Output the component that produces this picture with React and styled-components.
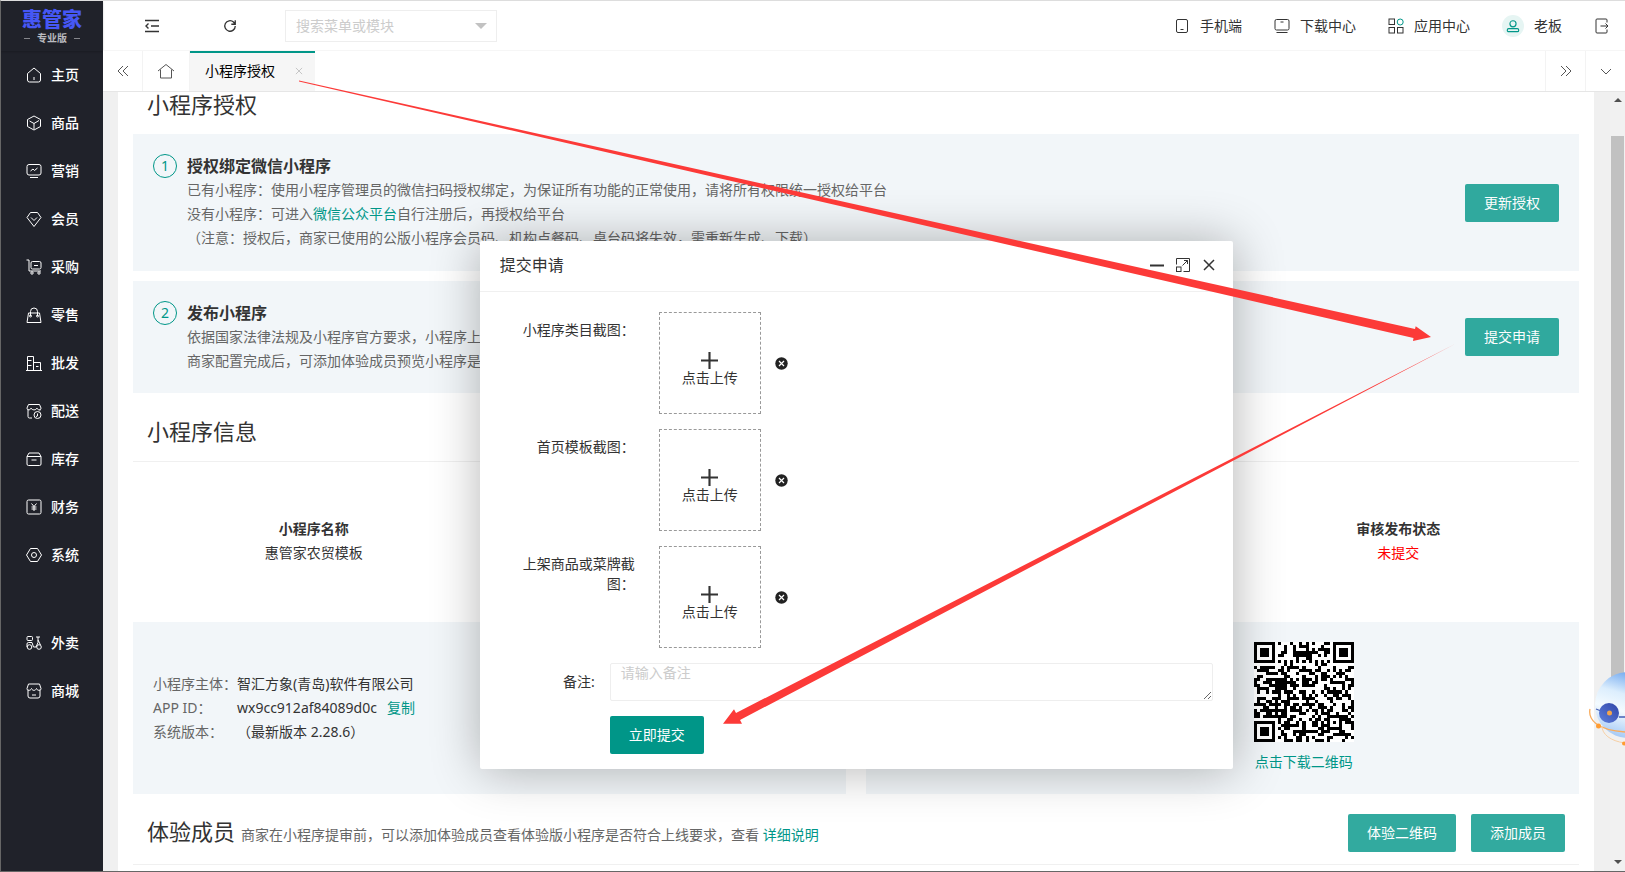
import React, { useState } from 'react';
import styled, { createGlobalStyle, css } from 'styled-components';

const GlobalStyle = createGlobalStyle`
  * {
    box-sizing: border-box;
  }
  body {
    margin: 0;
    color: #333;
    font: 14px/24px "Noto Sans", "Noto Sans CJK SC", sans-serif;
    overflow: hidden;
  }
  button, input, textarea {
    font: inherit;
  }
  a {
    color: #009688;
    text-decoration: none;
  }
`;

const Layout = styled.div`
  display: flex;
  height: 100vh;
  border: 1px solid #666;
  border-top-color: #ddd;
  border-right: 0;
  overflow: hidden;
`;

const Sidebar = styled.nav`
  flex: none;
  width: 102px;
  background: #20222a;
`;

const Logo = styled.div`
  display: flex;
  flex-direction: column;
  align-items: center;
  height: 50px;
  padding-top: 8px;
  font-size: 20px;
  font-weight: 900;
  line-height: 22px;
  color: #4657f5;
  box-shadow: 0 1px 2px rgba(0, 0, 0, 0.2);
`;

const Edition = styled.div`
  display: flex;
  align-items: center;
  gap: 7px;
  font-size: 10px;
  font-weight: 700;
  line-height: 14px;
  color: #b9babf;

  &::before,
  &::after {
    content: "";
    width: 6px;
    height: 1px;
    background: #85868b;
  }
`;

const MenuItem = styled.a`
  display: flex;
  align-items: center;
  gap: 9px;
  height: 48px;
  padding-left: 25px;
  margin-top: ${props => (props.$gap ? '40px' : '0')};
  color: #fff;
  font-weight: 500;
`;

const Main = styled.div`
  display: flex;
  flex: 1;
  flex-direction: column;
  min-width: 0;
`;

const Header = styled.header`
  display: flex;
  align-items: center;
  justify-content: space-between;
  height: 50px;
  flex: none;
  border-bottom: 1px solid #f6f6f6;
`;

const HeaderLeft = styled.div`
  display: flex;
  align-items: center;
  padding-left: 41px;
`;

const HeaderRight = styled.div`
  display: flex;
  align-items: center;
  padding-right: 15px;
`;

const IconButton = styled.button`
  display: flex;
  align-items: center;
  justify-content: center;
  padding: 0;
  width: ${props => props.$width || 16}px;
  height: 16px;
  margin-right: ${props => props.$space || 0}px;
  border: 0;
  background: none;
  color: ${props => (props.$muted ? '#c2c2c2' : '#333')};
  cursor: pointer;
`;

const SearchBox = styled.div`
  display: flex;
  align-items: center;
  width: 212px;
  height: 32px;
  padding: 0 9px 0 10px;
  border: 1px solid #eee;
`;

const SearchInput = styled.input`
  flex: 1;
  min-width: 0;
  padding: 0;
  border: 0;
  outline: 0;

  &::placeholder {
    color: #ccc;
  }
`;

const Caret = styled.span`
  border: 6px solid transparent;
  border-top-color: #c2c2c2;
  border-bottom: 0;
`;

const HeaderLink = styled.a`
  display: flex;
  align-items: center;
  gap: 10px;
  margin-right: 32px;
  color: #333;
`;

const Avatar = styled.span`
  display: flex;
  align-items: center;
  justify-content: center;
  width: 22px;
  height: 22px;
  border-radius: 50%;
  background: #e6f5f3;
  color: #009688;
`;

const Tabs = styled.div`
  display: flex;
  flex: none;
  height: 41px;
  border-bottom: 1px solid #e6e6e6;
`;

const TabControl = styled.button`
  display: flex;
  align-items: center;
  justify-content: center;
  width: ${props => props.$width || 40}px;
  padding: 0;
  border: 0;
  border-right: 1px solid #f3f3f3;
  background: #fff;
  color: #555;

  ${props => props.$right && css`
    border-right: 0;
    border-left: 1px solid #f3f3f3;
  `}
`;

const Tab = styled.div`
  display: flex;
  align-items: center;
  gap: 19px;
  height: 40px;
  padding: 0 11px 2px 15px;
  margin-right: auto;
  border-top: 2px solid #009688;
  background: #f6f6f6;
  color: #000;
`;

const Body = styled.div`
  position: relative;
  display: flex;
  flex: 1;
  min-height: 0;
  overflow: hidden;
  background: #f0f0f0;
`;

const Page = styled.main`
  flex: 1;
  margin: 0 16px 0 15px;
  padding: 0 15px;
  background: #fff;
`;

const Scrollbar = styled.div`
  display: flex;
  flex-direction: column;
  align-items: center;
  width: 15px;
  padding: 6px 0 7px;
  background: #f1f1f1;
`;

const ScrollArrow = styled.span`
  border: 4px solid transparent;
  border-top-width: ${props => (props.$up ? 0 : 4)}px;
  border-bottom-width: ${props => (props.$up ? 4 : 0)}px;
  border-${props => (props.$up ? 'bottom' : 'top')}-color: #505050;
`;

const Thumb = styled.span`
  width: 13px;
  height: 570px;
  margin: 34px 0 auto;
  background: #c1c1c1;
`;

const TitleRow = styled.div`
  display: flex;
  align-items: center;
  gap: 15px;
  height: ${props => props.$height}px;
  padding: 7px 14px 0;
  border-bottom: 1px solid #f0f0f0;
`;

// the heading that sits right under the tabs
const TopTitleRow = styled.div`
  padding: 0 14px 18px;
`;

const Title = styled.h2`
  margin: 0;
  margin-right: auto;
  font-size: 22px;
  font-weight: 400;
  line-height: 24px;
`;

const Hint = styled.small`
  margin-left: 6px;
  font-size: 14px;
  color: #666;
`;

const Panel = styled.section`
  display: flex;
  align-items: center;
  gap: 10px;
  padding: 20px;
  background: #f2f6f9;
`;

const Step = styled(Panel)`
  align-items: flex-start;
  height: ${props => props.$height}px;
  margin-bottom: ${props => props.$space || 0}px;
`;

const StepNumber = styled.span`
  display: flex;
  align-items: center;
  justify-content: center;
  width: 24px;
  height: 24px;
  border: 1px solid #009688;
  border-radius: 50%;
  color: #009688;
`;

const StepText = styled.div`
  flex: 1;
  color: #666;
`;

const StepTitle = styled.h3`
  margin: 0;
  font-size: 16px;
  line-height: 24px;
  color: #333;
`;

const Button = styled.button`
  height: 38px;
  padding: 0 19px;
  border: 0;
  border-radius: 2px;
  background: #009688;
  color: #fff;
  white-space: nowrap;
  opacity: ${props => (props.$soft ? 0.8 : 1)};
  align-self: ${props => (props.$submit ? 'flex-start' : 'center')};
  margin-left: ${props => (props.$submit ? '110px' : '0')};
`;

const Summary = styled.div`
  display: grid;
  grid-template-columns: repeat(4, 1fr);
  align-items: center;
  height: 160px;
  padding-bottom: 2px;
  text-align: center;
`;

const SummaryItem = styled.div`
  grid-column: ${props => props.$column};
  color: ${props => (props.$alert ? '#f00' : '#333')};
`;

const SummaryName = styled.strong`
  display: block;
  color: #333;
`;

const Panels = styled.div`
  display: grid;
  grid-template-columns: 1fr 1fr;
  gap: 20px;
`;

const Details = styled.dl`
  display: grid;
  grid-template-columns: 84px auto;
  margin: 0;
`;

const Term = styled.dt`
  color: #666;
`;

const Value = styled.dd`
  margin: 0;
`;

const CopyLink = styled.a`
  margin-left: 10px;
`;

const CodePanel = styled(Panel)`
  padding-left: 54.4%;
`;

const Code = styled.div`
  display: flex;
  flex-direction: column;
  align-items: center;
  gap: 8px;
`;

const Overlay = styled.div`
  position: absolute;
  inset: 0 15px 0 0;
  display: flex;
  align-items: flex-start;
  justify-content: center;
  padding-top: 149px;
`;

const Dialog = styled.div`
  width: 50%;
  border-radius: 2px;
  background: #fff;
  box-shadow: 1px 1px 50px rgba(0, 0, 0, 0.3);
`;

const DialogHead = styled.div`
  display: flex;
  align-items: center;
  height: 51px;
  padding: 0 16px 2px 20px;
  border-bottom: 1px solid #f0f0f0;
  font-size: 16px;
`;

const DialogTitle = styled.span`
  margin-right: auto;
`;

const Form = styled.form`
  display: flex;
  flex-direction: column;
  gap: 15px;
  padding: 20px 20px 15px;
`;

const Field = styled.div`
  display: flex;
`;

const UploadLabel = styled.label`
  width: 135px;
  padding: 8px 0 0 15px;
  margin-right: 24px;
  line-height: 20px;
  text-align: right;
`;

const UploadBox = styled.button`
  display: flex;
  flex-direction: column;
  align-items: center;
  justify-content: center;
  gap: 1px;
  width: 102px;
  height: 102px;
  padding: 11px 0 0;
  margin-right: 14px;
  border: 1px dashed #999;
  background: #fff;
  color: #333;
  line-height: 16px;
`;

const ClearButton = styled(IconButton)`
  align-self: center;
`;

const NoteLabel = styled.label`
  width: 110px;
  padding: 7px 15px 0 0;
  text-align: right;
`;

const Note = styled.textarea`
  flex: 1;
  display: block;
  height: 38px;
  padding: 0 10px;
  border: 1px solid #eee;
  border-radius: 2px;
  outline: 0;
  line-height: 18px;
  resize: vertical;

  &::placeholder {
    color: #ccc;
  }
`;

const Marks = styled.svg`
  position: fixed;
  inset: 0;
  width: 100vw;
  height: 100vh;
  pointer-events: none;
`;

const Robot = styled.svg`
  position: fixed;
  right: 0;
  top: 664px;
`;

const glyphs = {
  home: <><path d="M1.5 6.500 8 1l6.500 5.500V13a2 2 0 0 1-2 2h-9a2 2 0 0 1-2-2z" /><path d="M8 10v3" /></>,
  goods: <><path d="m8 1 6.500 3.500v7L8 15l-6.500-3.500v-7z" /><path d="M3.500 6 8 8.500l5-3M8 8.500V14" /></>,
  promo: <><rect x="1" y="1.500" width="14" height="10.500" rx="2" /><path d="m4.500 8 2.500-2 1.500 1.500L11.500 5M4 14.500h8" /></>,
  member: <><path d="M4.500 1.500h7L15 6.500 8 15.500 1 6.500z" /><path d="m5 6.500 3 3 3-3" /></>,
  buy: <><path d="M.5 1H3v11h12" /><rect x="5" y="2.500" width="10" height="7.500" rx="1.500" /><path d="M8 6.500h4" /><circle cx="6" cy="14" r="1.200" /><circle cx="13" cy="14" r="1.200" /></>,
  retail: <><path d="M2.500 6h11l1.500 9.500H1z" /><path d="M4.500 9V4.500a3.500 3.500 0 0 1 7 0V9" /><circle cx="4.500" cy="9" r="1" /><circle cx="11.500" cy="9" r="1" /></>,
  batch: <><path d="M1.500 15V1.500h6V15M7.500 7.500h7V15M0 15.500h16M1.500 5.500h4M1.500 10.500h4M10 11.500h2.500" /></>,
  delivery: <><path d="M2 6v7.500a1.500 1.500 0 0 0 1.500 1.500H6M14 6v1.500M1 5l1.500-3.500h11L15 5c0 2.500-3.500 2.500-4 0-1 2.500-5 2.500-6 0-.5 2.500-4 2.500-4 0z" /><circle cx="11.500" cy="12" r="3.500" /><path d="M11.500 10.500V13l-1.500.5" /></>,
  stock: <><path d="M1 5.500 3 2h10l2 3.500V13a1.500 1.500 0 0 1-1.500 1.500h-11A1.500 1.500 0 0 1 1 13zM1 5.500h14M5.500 9h5" /></>,
  money: <><rect x="1" y="1" width="14" height="14" rx="1.500" /><path d="m5.500 4.500 2.500 3 2.500-3M8 7.500V12M5.500 8h5M5.500 10h5" /></>,
  system: <><path d="M4.500 1.500h7L15.500 8l-4 6.500h-7L.5 8z" /><circle cx="8" cy="8" r="2.500" /></>,
  takeout: <><rect x="1" y="1.500" width="5.500" height="4" rx="1" /><path d="M1 12V9a1.500 1.500 0 0 1 1.500-1.500H6L7.500 12h2.500l2-4.500V2h-2M12 2h2M12 5l2.500 5" /><circle cx="3.500" cy="12" r="2.300" /><circle cx="13" cy="12" r="2.300" /></>,
  mall: <><path d="M2 6.500V13a2 2 0 0 0 2 2h8a2 2 0 0 0 2-2V6.500M1 5.500 2.500 1h11L15 5.500c0 2.500-3.500 2.500-4.500 0-1 2.500-4 2.500-5 0-1 2.500-4.500 2.500-4.500 0zM6 12h4" /></>,
  phone: <><rect x="2.500" y="1.500" width="11" height="13" rx="1.500" /><path d="M6.500 11.500h3" /></>,
  download: <><rect x="1" y="1.500" width="14" height="10.500" rx="1.500" /><path d="M6.500 4h3M2.500 14.500h11" /></>,
  apps: <><rect x="1" y="1" width="5.500" height="5.500" /><rect x="1" y="9.500" width="5.500" height="5.500" /><rect x="9.500" y="9.500" width="5.500" height="5.500" /><circle cx="12.200" cy="4" r="3" stroke="#009688" /></>,
  user: <><circle cx="8" cy="5.500" r="3.500" /><rect x="1.500" y="11" width="13" height="3.500" rx="1.500" /></>,
  logout: <><path d="M13 4.500V2a1 1 0 0 0-1-1H3a1 1 0 0 0-1 1v12a1 1 0 0 0 1 1h9a1 1 0 0 0 1-1v-2.500M6.500 8h7.500M11.500 5.500 14 8l-2.500 2.500" /></>,
  fold: <path d="M1 2.500h14M7 8h8M1 13.500h14M4.500 5.500 2 8l2.500 2.500" />,
  refresh: <path d="M14 8a6 6 0 1 1-2-4.500L14 6M14 1.500V6H9.500" />,
  left: <path d="M8 3 3 8l5 5M13 3 8 8l5 5" />,
  right: <path d="m3 3 5 5-5 5M8 3l5 5-5 5" />,
  down: <path d="m3 6 5 5 5-5" />,
  house: <path d="M0 8 8 1.500 16 8M2.500 6.500v8.500h11V6.500" />,
  cross: <path d="m3 3 10 10M13 3 3 13" />,
  minus: <path d="M1 8.500h14" />,
  expand: <><path d="M1.500 7.500v-6h13v13h-6M7.500 8.500l5-5M9 3.500h3.500V7" /><rect x="1.500" y="10" width="4.500" height="4.500" /></>,
  plus: <path d="M8 0v16M0 8h16" />,
};

const Icon = ({ name, size = 16, stroke = 1 }) => (
  <svg width={size} height={size} viewBox="0 0 16 16" fill="none" stroke="currentColor" strokeWidth={stroke} aria-hidden="true">
    {glyphs[name]}
  </svg>
);

const menu = [
  ['home', '主页'],
  ['goods', '商品'],
  ['promo', '营销'],
  ['member', '会员'],
  ['buy', '采购'],
  ['retail', '零售'],
  ['batch', '批发'],
  ['delivery', '配送'],
  ['stock', '库存'],
  ['money', '财务'],
  ['system', '系统'],
  ['takeout', '外卖'],
  ['mall', '商城'],
];

const uploads = ['小程序类目截图：', '首页模板截图：', '上架商品或菜牌截图：'];

// 33 modules a side: three finders, one alignment mark, the rest data
const SIDE = 33;

const ring = (x, y, cx, cy) => Math.max(Math.abs(x - cx), Math.abs(y - cy));

const isDark = (x, y) => {
  for (const [cx, cy] of [[3, 3], [29, 3], [3, 29]]) {
    const d = ring(x, y, cx, cy);
    if (d <= 4) return d === 3 || d <= 1;
  }
  const a = ring(x, y, 26, 26);
  if (a <= 2) return a !== 1;
  if (x === 6 || y === 6) return (x + y) % 2 === 0;
  const n = Math.sin(x * 12.9898 + y * 78.233) * 43758.5453;
  return n - Math.floor(n) < 0.52;
};

const codePath = () => {
  let d = '';
  for (let y = 0; y < SIDE; y++) {
    for (let x = 0; x < SIDE; x++) {
      if (isDark(x, y)) d += `M${x} ${y}h1v1h-1z`;
    }
  }
  return d;
};

const QrCode = () => (
  <svg width="100" height="100" viewBox="0 0 33 33" shapeRendering="crispEdges" role="img" aria-label="二维码">
    <path fill="#fff" d="M0 0h33v33H0z" />
    <path d={codePath()} />
  </svg>
);

function App() {
  const [keyword, setKeyword] = useState('');
  const [note, setNote] = useState('');

  return (
    <>
      <GlobalStyle />
      <Layout>
        <Sidebar>
          <Logo>
            惠管家
            <Edition>专业版</Edition>
          </Logo>
          {menu.map(([icon, text]) => (
            <MenuItem key={icon} href="#" $gap={icon === 'takeout'}>
              <Icon name={icon} />
              {text}
            </MenuItem>
          ))}
        </Sidebar>

        <Main>
          <Header>
            <HeaderLeft>
              <IconButton $space={62} aria-label="收起菜单"><Icon name="fold" stroke={1.4} /></IconButton>
              <IconButton $space={47} aria-label="刷新"><Icon name="refresh" stroke={1.5} size={14} /></IconButton>
              <SearchBox>
                <SearchInput
                  placeholder="搜索菜单或模块"
                  aria-label="搜索菜单或模块"
                  value={keyword}
                  onChange={e => setKeyword(e.target.value)}
                />
                <Caret />
              </SearchBox>
            </HeaderLeft>
            <HeaderRight>
              <HeaderLink href="#"><Icon name="phone" />手机端</HeaderLink>
              <HeaderLink href="#"><Icon name="download" />下载中心</HeaderLink>
              <HeaderLink href="#"><Icon name="apps" />应用中心</HeaderLink>
              <HeaderLink href="#"><Avatar><Icon name="user" size={14} stroke={1.3} /></Avatar>老板</HeaderLink>
              <IconButton aria-label="退出"><Icon name="logout" /></IconButton>
            </HeaderRight>
          </Header>

          <Tabs>
            <TabControl aria-label="向左"><Icon name="left" /></TabControl>
            <TabControl $width={47} aria-label="首页"><Icon name="house" /></TabControl>
            <Tab>
              小程序授权
              <IconButton $width={10} $muted aria-label="关闭标签"><Icon name="cross" size={12} stroke={1.5} /></IconButton>
            </Tab>
            <TabControl $right aria-label="向右"><Icon name="right" /></TabControl>
            <TabControl $right aria-label="更多"><Icon name="down" /></TabControl>
          </Tabs>

          <Body>
            <Page>
              <TopTitleRow>
                <Title>小程序授权</Title>
              </TopTitleRow>
              <Step $height={137} $space={10}>
                <StepNumber>1</StepNumber>
                <StepText>
                  <StepTitle>授权绑定微信小程序</StepTitle>
                  已有小程序：使用小程序管理员的微信扫码授权绑定，为保证所有功能的正常使用，请将所有权限统一授权给平台<br />
                  没有小程序：可进入<a href="#">微信公众平台</a>自行注册后，再授权给平台<br />
                  （注意：授权后，商家已使用的公版小程序会员码、机构点餐码、桌台码将失效，需重新生成、下载）
                </StepText>
                <Button $soft>更新授权</Button>
              </Step>
              <Step $height={112}>
                <StepNumber>2</StepNumber>
                <StepText>
                  <StepTitle>发布小程序</StepTitle>
                  依据国家法律法规及小程序官方要求，小程序上<br />
                  商家配置完成后，可添加体验成员预览小程序是
                </StepText>
                <Button $soft>提交申请</Button>
              </Step>

              <TitleRow $height={69}>
                <Title>小程序信息</Title>
              </TitleRow>
              <Summary>
                <SummaryItem $column={1}>
                  <SummaryName>小程序名称</SummaryName>
                  惠管家农贸模板
                </SummaryItem>
                <SummaryItem $column={4} $alert>
                  <SummaryName>审核发布状态</SummaryName>
                  未提交
                </SummaryItem>
              </Summary>
              <Panels>
                <Panel>
                  <Details>
                    <Term>小程序主体：</Term>
                    <Value>智汇方象(青岛)软件有限公司</Value>
                    <Term>APP ID：</Term>
                    <Value>wx9cc912af84089d0c<CopyLink href="#">复制</CopyLink></Value>
                    <Term>系统版本：</Term>
                    <Value>（最新版本 2.28.6）</Value>
                  </Details>
                </Panel>
                <CodePanel>
                  <Code>
                    <QrCode />
                    <a href="#">点击下载二维码</a>
                  </Code>
                </CodePanel>
              </Panels>

              <TitleRow $height={71}>
                <Title>
                  体验成员
                  <Hint>商家在小程序提审前，可以添加体验成员查看体验版小程序是否符合上线要求，查看 <a href="#">详细说明</a></Hint>
                </Title>
                <Button $soft>体验二维码</Button>
                <Button $soft>添加成员</Button>
              </TitleRow>
            </Page>
            <Scrollbar>
              <ScrollArrow $up />
              <Thumb />
              <ScrollArrow />
            </Scrollbar>

            <Overlay>
              <Dialog role="dialog" aria-label="提交申请">
                <DialogHead>
                  <DialogTitle>提交申请</DialogTitle>
                  <IconButton $space={10} aria-label="最小化"><Icon name="minus" stroke={2} /></IconButton>
                  <IconButton $space={10} aria-label="最大化"><Icon name="expand" /></IconButton>
                  <IconButton aria-label="关闭"><Icon name="cross" stroke={1.5} size={18} /></IconButton>
                </DialogHead>
                <Form onSubmit={e => e.preventDefault()}>
                  {uploads.map((label, i) => (
                    <Field key={label}>
                      <UploadLabel htmlFor={`upload${i}`}>{label}</UploadLabel>
                      <UploadBox type="button" id={`upload${i}`}>
                        <Icon name="plus" stroke={2} size={17} />
                        点击上传
                      </UploadBox>
                      <ClearButton type="button" $width={13} aria-label="清除">
                        <svg width="13" height="13" viewBox="0 0 13 13">
                          <circle cx="6.5" cy="6.5" r="6.2" fill="#222" />
                          <path d="m4 4 5 5M9 4 4 9" stroke="#fff" strokeWidth="1.2" />
                        </svg>
                      </ClearButton>
                    </Field>
                  ))}
                  <Field>
                    <NoteLabel htmlFor="note">备注:</NoteLabel>
                    <Note id="note" placeholder="请输入备注" value={note} onChange={e => setNote(e.target.value)} />
                  </Field>
                  <Button $submit>立即提交</Button>
                </Form>
              </Dialog>
            </Overlay>
          </Body>
        </Main>
      </Layout>

      <Robot width="36" height="86" viewBox="0 0 36 86" aria-hidden="true">
        <defs>
          <linearGradient id="shell" x1="0.6" y1="0" x2="0.3" y2="1">
            <stop offset="0" stopColor="#6ba4ee" />
            <stop offset="0.35" stopColor="#dceefd" />
            <stop offset="0.6" stopColor="#f4fbff" />
            <stop offset="1" stopColor="#9fc6f5" />
          </linearGradient>
          <linearGradient id="eye" x1="1" y1="0" x2="0" y2="1">
            <stop offset="0" stopColor="#2f45a8" />
            <stop offset="1" stopColor="#5f80dc" />
          </linearGradient>
        </defs>
        <circle cx="39" cy="41" r="33" fill="url(#shell)" />
        <path d="M1 45c-2 10 6 21 35 23" fill="none" stroke="#f9ac5c" strokeWidth="1.3" />
        <path d="M13 62c0 8 8 15 23 17" fill="none" stroke="#f6cfa4" />
        <path d="M7 45l5 2M30 53h6" stroke="#4560b5" strokeWidth="1.3" />
        <circle cx="20" cy="49" r="10" fill="url(#eye)" />
        <circle cx="20.500" cy="49" r="2.500" fill="#f5a54a" />
        <circle cx="9.500" cy="62" r="2.500" fill="#ff9c32" />
        <circle cx="35" cy="79.500" r="2" fill="#ff9c32" />
      </Robot>

      <Marks viewBox="0 0 1625 872" preserveAspectRatio="none" fill="#fc3a38" aria-hidden="true">
        <path d="M299 80.500 1415 329l.7-2.700L1431 337l-18 4 .5-3L299 81.500z" />
        <path d="M1455 344 736 713l-2-3.700L723 723.700h19l-2-3.700z" />
      </Marks>
    </>
  );
}

export default App;
